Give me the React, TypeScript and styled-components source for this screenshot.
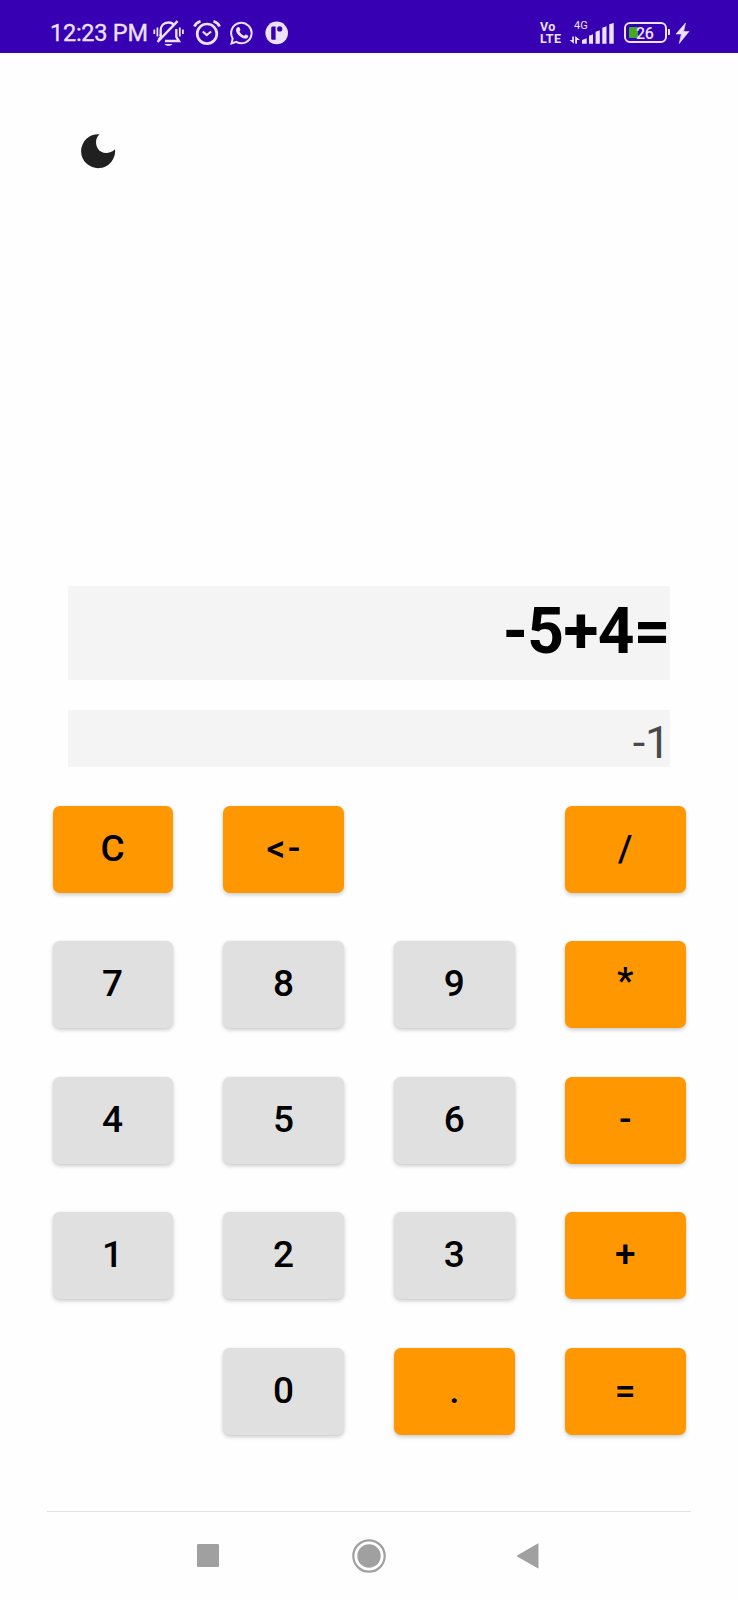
import React from "react";
import styled, { createGlobalStyle } from "styled-components";

const GlobalStyle = createGlobalStyle`
  *, *::before, *::after { box-sizing: border-box; }
  html, body { margin: 0; background: #fefefe; }
  body { font-family: Roboto, "Liberation Sans", sans-serif; color: #000; }
`;

const Screen = styled.div`
  width: 738px;
  height: 1600px;
  display: flex;
  flex-direction: column;
  background: #fefefe;
  overflow: hidden;
`;

const StatusBar = styled.header`
  flex: none;
  height: 53px;
  padding: 14px 48px 0 50px;
  display: flex;
  justify-content: space-between;
  background: #3700b3;
  color: #ece2fb;
`;

const StatusGroup = styled.div`
  display: flex;
  align-items: flex-start;
  height: 38px;
`;

const Clock = styled.span`
  width: 103px;
  font-size: 23.5px;
  line-height: 39px;
  letter-spacing: -0.25px;
  -webkit-text-stroke: 0.3px #ece2fb;
  white-space: nowrap;
`;

const StatusIcons = styled.div`
  display: flex;
  padding-top: 5px;
`;

const Glyph = styled.svg<{ $gap?: number }>`
  flex: none;
  display: block;
  margin-left: ${(p) => p.$gap ?? 0}px;
`;

const Volte = styled.div`
  display: flex;
  flex-direction: column;
  width: 29px;
  padding-top: 7px;
  font-size: 12.5px;
  font-weight: 700;
  line-height: 12px;
  letter-spacing: 0.4px;
`;

const Network = styled.div`
  display: flex;
  flex-direction: column;
  width: 48px;
  padding-top: 6px;
`;

const NetworkLabel = styled.span`
  padding-left: 5px;
  font-size: 11px;
  line-height: 12px;
  height: 3px;
`;

const Battery = styled.div`
  width: 43px;
  height: 21px;
  margin: 8px 0 0 7px;
  padding: 2px;
  border: 2.5px solid #ece2fb;
  border-radius: 6px;
  display: flex;
  align-items: center;
`;

const Charge = styled.span`
  width: 9px;
  height: 11px;
  margin-left: 1px;
  border-radius: 1px;
  background: #43a822;
`;

const Percent = styled.span`
  margin-left: -2px;
  font-size: 16px;
  font-weight: 500;
  line-height: 17px;
  letter-spacing: -0.4px;
  padding-top: 1px;
`;

const BatteryTip = styled.span`
  width: 2px;
  height: 6px;
  margin: 15px 0 0 1px;
  border-radius: 0 1px 1px 0;
  background: #ece2fb;
`;

const Toolbar = styled.div`
  flex: none;
  height: 533px;
  padding: 81px 0 0 80.5px;
`;

const ThemeToggle = styled.button`
  display: block;
  padding: 0;
  border: 0;
  background: none;
`;

const Displays = styled.section`
  flex: none;
  display: flex;
  flex-direction: column;
  gap: 30px;
  padding: 0 68px;
`;

const Expression = styled.div`
  height: 94px;
  background: #f4f4f4;
  font-size: 64px;
  font-weight: 700;
  line-height: 92px;
  letter-spacing: -0.6px;
  text-align: right;
`;

const Result = styled.div`
  height: 56.5px;
  background: #f4f4f4;
  color: #494949;
  font-size: 45px;
  line-height: 65px;
  letter-spacing: -0.2px;
  text-align: right;
`;

const Keypad = styled.main`
  flex: none;
  display: grid;
  grid-template-columns: repeat(4, 120.5px);
  grid-template-rows: repeat(5, 87px);
  column-gap: 50.4px;
  row-gap: 48.4px;
  padding: 39.6px 0 0 52.5px;
`;

const Key = styled.button<{ $accent?: boolean; $lift?: number }>`
  border: 0;
  padding: 0 0 ${(p) => 1 + (p.$lift ?? 0) * 2}px;
  border-radius: 7px;
  background: ${(p) => (p.$accent ? "#ff9800" : "#e0e0e0")};
  box-shadow: 0 2px 4px rgba(0, 0, 0, 0.2), 0 0 2px rgba(0, 0, 0, 0.06);
  color: #000;
  font-family: inherit;
  font-size: 37px;
  font-weight: 500;
  line-height: 44px;
  letter-spacing: 2.4px;
  text-indent: 2px;
`;

const Blank = styled.span``;

const Navigation = styled.nav`
  flex: none;
  display: flex;
  align-items: center;
  justify-content: space-between;
  height: 89px;
  margin: 76px 47px 0;
  padding: 0 152px 0 150px;
  border-top: 1px solid #e4e4e4;
`;

type KeyDef = { label: string; accent?: boolean; lift?: number } | null;

const keys: KeyDef[] = [
  { label: "C", accent: true }, { label: "<-", accent: true }, null, { label: "/", accent: true },
  { label: "7" }, { label: "8" }, { label: "9" }, { label: "*", accent: true, lift: 3 },
  { label: "4" }, { label: "5" }, { label: "6" }, { label: "-", accent: true },
  { label: "1" }, { label: "2" }, { label: "3" }, { label: "+", accent: true },
  null, { label: "0" }, { label: ".", accent: true }, { label: "=", accent: true },
];

const MutedBell = () => (
  <Glyph width="32" height="28" viewBox="0.5 0 32 28" fill="none" stroke="#ece2fb" strokeWidth="2.3">
    <path d="M8.2 17V11.5C8.2 6.8 11 3.5 16 3.5C18 3.5 20 4.2 21.3 5.5M23.8 10V18L26.5 22H12.5" />
    <path d="M5 23L25 2.2" strokeWidth="2.5" />
    <path d="M8.2 15V18L6 21" />
    <path d="M1.8 10.5V15M4.9 8.5V17.5M27.3 8.5V17.5M30.4 10.5V15" strokeWidth="1.8" />
    <path d="M12 25H20C19 27.4 13 27.4 12 25Z" fill="#ece2fb" stroke="none" />
  </Glyph>
);

const Alarm = () => (
  <Glyph $gap={8} width="28" height="28" viewBox="0 0 28 28" fill="none" stroke="#ece2fb" strokeWidth="2.7">
    <circle cx="14" cy="14.8" r="9.8" />
    <path d="M1.4 7.6C2.4 5 4.8 3 7.5 2.2M26.6 7.6C25.6 5 23.2 3 20.5 2.2" />
    <path d="M9.8 12.5L13.7 16L18.2 12.5" strokeWidth="2.2" />
  </Glyph>
);

const Chat = () => (
  <Glyph $gap={9} width="24" height="28" viewBox="0 0 24 28">
    <path d="M2.7 19.7A10.2 10.2 0 1 1 6.3 23.2L1.5 24.7Z" transform="translate(0 -.3)" fill="none" stroke="#ece2fb" strokeWidth="2" />
    <path d="M7.7 8.2C9.4 7.5 9.5 8.2 10.4 10.7C10.6 11.5 9.7 12 9.4 12.6C10.4 14.5 12 15.9 14 16.8C14.8 16.3 15.2 15.2 16 15.5L18.3 16.7C18.5 18.8 16.6 19.8 14.9 19.6C10.5 18.8 6.3 14.7 6 11.2C5.9 9.8 6.7 8.7 7.7 8.2Z" fill="#ece2fb" />
  </Glyph>
);

const RoundBadge = () => (
  <Glyph $gap={10.5} width="24" height="28" viewBox="0 0 24 28">
    <circle cx="11.7" cy="13.9" r="11.3" fill="#ece2fb" />
    <path d="M7.3 7.5H10.6V20.8H7.5Q6.2 20.8 6.2 19.3V9Q6.2 7.5 7.3 7.5Z" fill="#3700b3" />
    <circle cx="14.7" cy="9.9" r="2.6" fill="#3700b3" />
  </Glyph>
);

const Signal = () => (
  <Glyph width="48" height="24" viewBox="0 0 48 24" fill="#ece2fb">
    <path d="M3.2 13.5H4.9V20.8L.6 17H3.2ZM6.2 20.8V13L11 17H8V20.8Z" />
    <path d="M13 17L17.7 15.3V20.8H13ZM20 12.8L24 11.3V20.8H20ZM26.6 8.7L30.8 7.2V20.8H26.6ZM33.3 4.7L37.5 3.2V20.8H33.3ZM40.3 1.2L44.7 0V20.8H40.3Z" />
  </Glyph>
);

export default function App() {
  return (
    <>
      <GlobalStyle />
      <Screen>
        <StatusBar>
          <StatusGroup>
            <Clock>12:23 PM</Clock>
            <StatusIcons>
              <MutedBell />
              <Alarm />
              <Chat />
              <RoundBadge />
            </StatusIcons>
          </StatusGroup>
          <StatusGroup>
            <Volte>
              <span>Vo</span>
              <span>LTE</span>
            </Volte>
            <Network>
              <NetworkLabel>4G</NetworkLabel>
              <Signal />
            </Network>
            <Battery>
              <Charge />
              <Percent>26</Percent>
            </Battery>
            <BatteryTip />
            <Glyph $gap={6} width="14" height="32" viewBox="0 0 14 32" fill="#ece2fb">
              <path d="M9.5 9L0 20H5.4L3.2 29.5L13 17.5H7.6Z" stroke="#ece2fb" strokeWidth=".6" />
            </Glyph>
          </StatusGroup>
        </StatusBar>
        <Toolbar>
          <ThemeToggle aria-label="Toggle dark theme">
            <Glyph width="35" height="35" viewBox="0 0 35 35">
              <path d="M18.5.2A17 17 0 1 0 34 15.2C28.5 20.7 20 20 16.8 14.5C14 9.6 14.5 4 18.5.2Z" fill="#202020" />
            </Glyph>
          </ThemeToggle>
        </Toolbar>
        <Displays>
          <Expression>-5+4=</Expression>
          <Result>-1</Result>
        </Displays>
        <Keypad>
          {keys.map((k, i) =>
            k ? <Key key={i} $accent={k.accent} $lift={k.lift}>{k.label}</Key> : <Blank key={i} />
          )}
        </Keypad>
        <Navigation>
          <Glyph width="22" height="23" viewBox="0 0 22 23">
            <rect width="22" height="23" rx="1" fill="#a0a0a0" />
          </Glyph>
          <Glyph $gap={2} width="34" height="34" viewBox="0 0 34 34" fill="#a0a0a0">
            <circle cx="17" cy="17" r="15.7" fill="none" stroke="#a0a0a0" strokeWidth="2.2" />
            <circle cx="17" cy="17" r="11.7" />
          </Glyph>
          <Glyph width="22" height="26" viewBox="0 0 22 26">
            <path d="M.5 12.2L20.8.6Q21.5.3 21.5 1V25Q21.5 25.7 20.8 25.3L.5 13.7Q-.2 13 .5 12.2Z" fill="#a0a0a0" />
          </Glyph>
        </Navigation>
      </Screen>
    </>
  );
}
